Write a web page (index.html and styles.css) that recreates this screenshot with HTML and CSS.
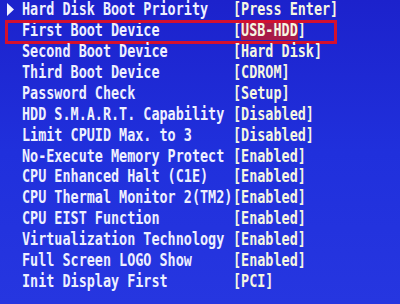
FILE: index.html
```html
<!DOCTYPE html>
<html>
<head>
<meta charset="utf-8">
<link rel="stylesheet" href="styles.css">
</head>
<body>
<div class="screen">
  <div class="row"><span class="mark"><svg width="7" height="13" viewBox="0 0 7 13"><polygon points="0,0 7,6.5 0,13" fill="#f2f2ff"/></svg></span><span class="label"><span class="t">Hard Disk Boot Priority</span></span><span class="value"><span class="t">[Press Enter]</span></span></div>
  <div class="row selected"><span class="mark"></span><span class="label"><span class="t">First Boot Device</span></span><span class="value"><span class="t">[<span class="hl">USB-HDD</span>]</span></span></div>
  <div class="row"><span class="mark"></span><span class="label"><span class="t">Second Boot Device</span></span><span class="value"><span class="t">[Hard Disk]</span></span></div>
  <div class="row"><span class="mark"></span><span class="label"><span class="t">Third Boot Device</span></span><span class="value"><span class="t">[CDROM]</span></span></div>
  <div class="row"><span class="mark"></span><span class="label"><span class="t">Password Check</span></span><span class="value"><span class="t">[Setup]</span></span></div>
  <div class="row"><span class="mark"></span><span class="label"><span class="t">HDD S.M.A.R.T. Capability</span></span><span class="value"><span class="t">[Disabled]</span></span></div>
  <div class="row"><span class="mark"></span><span class="label"><span class="t">Limit CPUID Max. to 3</span></span><span class="value"><span class="t">[Disabled]</span></span></div>
  <div class="row"><span class="mark"></span><span class="label"><span class="t">No-Execute Memory Protect</span></span><span class="value"><span class="t">[Enabled]</span></span></div>
  <div class="row"><span class="mark"></span><span class="label"><span class="t">CPU Enhanced Halt (C1E)</span></span><span class="value"><span class="t">[Enabled]</span></span></div>
  <div class="row"><span class="mark"></span><span class="label"><span class="t">CPU Thermal Monitor 2(TM2)</span></span><span class="value"><span class="t">[Enabled]</span></span></div>
  <div class="row"><span class="mark"></span><span class="label"><span class="t">CPU EIST Function</span></span><span class="value"><span class="t">[Enabled]</span></span></div>
  <div class="row"><span class="mark"></span><span class="label"><span class="t">Virtualization Technology</span></span><span class="value"><span class="t">[Enabled]</span></span></div>
  <div class="row"><span class="mark"></span><span class="label"><span class="t">Full Screen LOGO Show</span></span><span class="value"><span class="t">[Enabled]</span></span></div>
  <div class="row"><span class="mark"></span><span class="label"><span class="t">Init Display First</span></span><span class="value"><span class="t">[PCI]</span></span></div>
</div>
</body>
</html>
```

FILE: styles.css
```css
html, body {
  margin: 0;
  padding: 0;
}
body {
  width: 400px;
  height: 304px;
  overflow: hidden;
  background: linear-gradient(180deg, #1c22cc 0%, #2030dc 50%, #2636e0 100%);
}
.screen {
  display: flex;
  flex-direction: column;
  padding: 0 0 0 7px;
  margin-top: -0.5px;
  font-family: "DejaVu Sans Mono", monospace;
  font-weight: bold;
  font-size: 13.45px;
  color: #eef0ff;
}
.row {
  position: relative;
  display: flex;
  align-items: center;
  height: 20.88px;
  white-space: pre;
}
.mark {
  width: 15px;
  display: flex;
  align-items: center;
}
.label {
  width: 211px;
  display: flex;
}
.value {
  display: flex;
  color: #f6f6e2;
}
.t {
  display: inline-block;
  transform: scaleY(1.3);
  transform-origin: 50% 55%;
}
.hl {
  background: #a81a48;
}
.selected::after {
  content: "";
  position: absolute;
  left: -2px;
  top: 0;
  width: 332px;
  height: 24px;
  box-sizing: border-box;
  border: 3px solid #d4102e;
}
```
